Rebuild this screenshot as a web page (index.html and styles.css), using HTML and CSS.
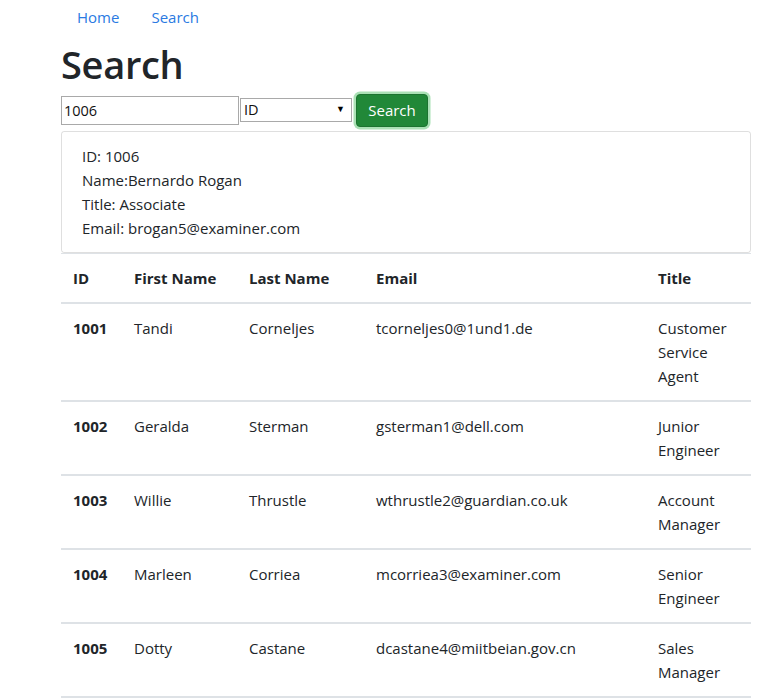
FILE: index.html
```html
<!DOCTYPE html>
<html>
<head>
<meta charset="utf-8">
<link rel="stylesheet" href="styles.css">
</head>
<body>
<div class="container">
  <nav class="nav">
    <a class="nav-link" href="#">Home</a>
    <a class="nav-link" href="#">Search</a>
  </nav>
  <h1 class="title">Search</h1>
  <form class="search-form">
    <input class="search-input" type="text" value="1006">
    <div class="select-box"><span>ID</span><span class="arrow">▼</span></div>
    <button class="btn-search" type="button">Search</button>
  </form>
  <div class="card">
    <div>ID: 1006</div>
    <div>Name:Bernardo Rogan</div>
    <div>Title: Associate</div>
    <div>Email: brogan5@examiner.com</div>
  </div>
  <table class="table">
    <colgroup>
      <col class="c-id"><col class="c-first"><col class="c-last"><col class="c-email"><col class="c-title">
    </colgroup>
    <thead>
      <tr><th>ID</th><th>First Name</th><th>Last Name</th><th>Email</th><th>Title</th></tr>
    </thead>
    <tbody>
      <tr><th>1001</th><td>Tandi</td><td>Corneljes</td><td>tcorneljes0@1und1.de</td><td>Customer Service Agent</td></tr>
      <tr><th>1002</th><td>Geralda</td><td>Sterman</td><td>gsterman1@dell.com</td><td>Junior Engineer</td></tr>
      <tr><th>1003</th><td>Willie</td><td>Thrustle</td><td>wthrustle2@guardian.co.uk</td><td>Account Manager</td></tr>
      <tr><th>1004</th><td>Marleen</td><td>Corriea</td><td>mcorriea3@examiner.com</td><td>Senior Engineer</td></tr>
      <tr><th>1005</th><td>Dotty</td><td>Castane</td><td>dcastane4@miitbeian.gov.cn</td><td>Sales Manager</td></tr>
    </tbody>
  </table>
</div>
</body>
</html>
```

FILE: styles.css
```css
* { box-sizing: border-box; }
body {
  margin: 0;
  font-family: "Open Sans", "Noto Sans", sans-serif;
  font-size: 15px;
  line-height: 24px;
  color: #212529;
  background: #fff;
}
.container {
  width: 690px;
  margin-left: 61px;
}
.nav {
  display: flex;
  padding-top: 5px;
}
.nav-link {
  padding: 0 16px;
  color: #2a7ae2;
  text-decoration: none;
  line-height: 24px;
}
.title {
  margin: 11px 0 0;
  font-size: 38px;
  line-height: 48px;
  font-weight: 600;
  letter-spacing: -0.3px;
}
.search-form {
  display: flex;
  align-items: center;
  margin-top: 3px;
  height: 38px;
}
.search-input {
  width: 178px;
  height: 29px;
  border: 1px solid #a9a9a9;
  padding: 0 2px;
  font-family: inherit;
  font-size: 14.5px;
  color: #111;
  margin: 0;
}
.select-box {
  width: 112px;
  height: 24px;
  margin-left: 1px;
  border: 1px solid #a9a9a9;
  display: flex;
  align-items: center;
  justify-content: space-between;
  padding: 0 6px 0 3px;
  font-size: 14.5px;
  color: #111;
}
.arrow {
  font-size: 9px;
  line-height: 9px;
  color: #000;
  margin-top: -4px;
}
.btn-search {
  margin-left: 4px;
  width: 72px;
  height: 33px;
  border: 1px solid #1c7430;
  border-radius: 4px;
  background: #218838;
  color: #fff;
  font-family: inherit;
  font-size: 15px;
  box-shadow: 0 0 0 2.5px rgba(100, 200, 120, .55);
}
.card {
  border: 1px solid rgba(0,0,0,.125);
  border-radius: 3px;
  padding: 12px 20px;
  margin-top: 2px;
}
.table {
  width: 100%;
  border-collapse: collapse;
  table-layout: fixed;
}
.c-id { width: 61px; }
.c-first { width: 115px; }
.c-last { width: 127px; }
.c-email { width: 282px; }
.c-title { width: 105px; }
.table th, .table td {
  padding: 12px;
  text-align: left;
  vertical-align: top;
  border-top: 2px solid #dee2e6;
  border-bottom: 2px solid #dee2e6;
}
.table thead th {
  border-top: 1px solid #dee2e6;
}
.table th { font-weight: 700; }
.table td { font-weight: 400; }
```
